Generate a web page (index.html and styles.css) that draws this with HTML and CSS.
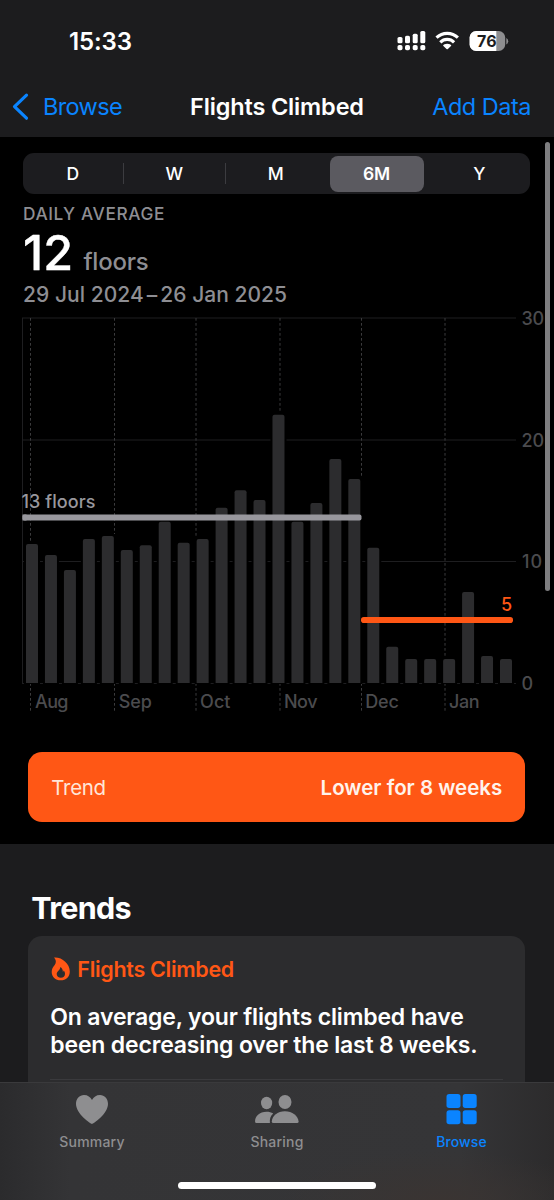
FILE: index.html
```html
<!DOCTYPE html>
<html lang="en">
<head>
<meta charset="utf-8">
<title>Flights Climbed</title>
<link rel="stylesheet" href="styles.css">
</head>
<body>
<div class="app">
  <header class="top">
    <div class="status">
      <span class="time">15:33</span>
      <svg class="status-icons" width="112" height="24" viewBox="0 0 112 24">
        <g fill="#fff">
          <rect x="0.5" y="8" width="5" height="6.3" rx="1.6"/><rect x="8" y="6.7" width="5" height="7.6" rx="1.6"/><rect x="15.7" y="4.7" width="5" height="9.6" rx="1.6"/><rect x="23.3" y="2" width="5" height="12.3" rx="1.6"/>
          <rect x="0.5" y="16" width="5" height="5.2" rx="1.8"/><rect x="8" y="16" width="5" height="5.2" rx="1.8"/><rect x="15.7" y="16" width="5" height="5.2" rx="1.8"/><rect x="23.3" y="16" width="5" height="5.2" rx="1.8"/>
        </g>
        <g transform="translate(3.700 0)">
          <path fill="#fff" d="M46.500 14.700C48.800 14.700 50 15.500 50.400 16Q50.800 16.500 50.300 16.900L47.200 20Q46.500 20.600 45.800 20L42.700 16.900Q42.200 16.500 42.600 16C43 15.500 44.200 14.700 46.500 14.700Z"/>
          <path d="M39.600 13.300A9.700 9.700 0 0 1 53.400 13.300M35.800 8.700A15.500 15.500 0 0 1 57.200 8.700" fill="none" stroke="#fff" stroke-width="3.100"/>
        </g>
        <defs><clipPath id="batt"><rect x="72.600" y="2" width="35.600" height="20" rx="6.500"/></clipPath></defs>
        <g clip-path="url(#batt)"><rect x="72" y="2" width="38" height="20" fill="#8e8e90"/><rect x="72" y="2" width="27.300" height="20" fill="#fff"/></g>
        <path d="M109.300 9v6.400q1.900-.8 1.900-3.200t-1.900-3.200z" fill="#8e8e90"/>
        <text class="battery" x="89.800" y="17.700" text-anchor="middle" textLength="19.500">76</text>
      </svg>
    </div>
    <nav class="nav">
      <a class="back"><svg width="18" height="30" viewBox="0 0 18 30"><path d="M14.500 3.200 2.500 14.700l12 11.500" fill="none" stroke="#0a84ff" stroke-width="3.200" stroke-linecap="round" stroke-linejoin="round"/></svg><span>Browse</span></a>
      <h1 class="title">Flights Climbed</h1>
      <a class="add">Add Data</a>
    </nav>
  </header>

  <main>
    <section class="panel">
      <div class="segments">
        <span class="seg">D</span><span class="seg line">W</span><span class="seg line">M</span><span class="seg on">6M</span><span class="seg">Y</span>
      </div>
      <div class="label">DAILY AVERAGE</div>
      <div class="value"><span class="num">12</span><span class="unit">floors</span></div>
      <div class="range">29 Jul 2024<span class="dash">–</span>26 Jan 2025</div>
      <svg class="chart" width="554" height="410" viewBox="0 310 554 410">
        <path d="M22.500 318V683.500M22 318H516M22 440H516M22 561.500H516M22 683.500H516" stroke="#1e1e20" fill="none"/>
        <path d="M30.500 318V713M114.500 318V713M196 318V713M280 318V713M361.500 318V713M445 318V713" stroke="#3b3b3d" stroke-dasharray="2.700 2.300" fill="none"/>
        <g class="bars" id="bars"></g>
        <rect x="22.500" y="514.500" width="339" height="6" rx="2" fill="#98979d"/>
        <rect x="22.500" y="514.500" width="4" height="6" fill="#98979d"/>
        <rect x="361" y="617" width="152" height="6" rx="2.800" fill="#ff5715"/>
        <g class="axis">
          <text x="521.500" y="324.500" textLength="22.500">30</text><text x="521.500" y="446.500" textLength="22.500">20</text><text x="522" y="568" textLength="20">10</text><text x="521.500" y="689.800">0</text>
          <text x="35" y="708.300" textLength="33.500">Aug</text><text x="118.800" y="708.300" textLength="33">Sep</text><text x="200" y="708.300" textLength="30.500">Oct</text><text x="284" y="708.300" textLength="33.500">Nov</text><text x="365.300" y="708.300" textLength="33.500">Dec</text><text x="449" y="708.300" textLength="30.500">Jan</text>
        </g>
        <text class="mark grey" x="21.500" y="507.500" textLength="74">13 floors</text>
        <text class="mark orange" x="501" y="610.500">5</text>
      </svg>
      <div class="trend"><span>Trend</span><strong>Lower for 8 weeks</strong></div>
    </section>
    <section class="trends">
      <h2>Trends</h2>
      <article class="card">
        <div class="card-head">
          <svg width="20" height="24" viewBox="0 0 20 24"><path fill="#ff5715" fill-rule="evenodd" d="M4 .6C11.500-.2 19.800 6.500 19.800 14.400 19.800 19.800 16 23.300 10.700 23.300 5.400 23.300 1.700 19.800 1.700 15 1.700 12.300 2.800 10.300 4.500 8.300 6.500 5.600 6.200 2.900 4 .6ZM10.200 10c.4 2.700-3.500 4-3.500 7.100 0 2.200 1.800 3.700 4.200 3.700s4.100-1.600 4.100-3.800c0-1.400-.5-2.500-1.300-3.500-.1.700-.4 1.100-.8 1.400 0-2.100-.9-4-2.700-4.900Z"/></svg>
          <span>Flights Climbed</span>
        </div>
        <p class="l1">On average, your flights climbed have</p>
        <p class="l2">been decreasing over the last 8 weeks.</p>
        <div class="rule"></div>
      </article>
    </section>
  </main>

  <footer class="tabs">
    <div class="tab-row">
      <div class="tab"><svg width="46" height="34" viewBox="0 0 46 34"><path fill="#8e8e90" d="M23 32C22 32 7 22 7 11.800 7 6.500 10.500 3 15 3c3.700 0 6.500 2 8 5 1.500-3 4.300-5 8-5 4.500 0 8 3.500 8 8.800C39 22 24 32 23 32Z"/></svg><span class="t1">Summary</span></div>
      <div class="tab"><svg width="46" height="34" viewBox="0 0 46 34"><g fill="#8e8e90"><ellipse cx="12.600" cy="11" rx="5.600" ry="6.200"/><ellipse cx="31" cy="10" rx="6.500" ry="7.100"/><path d="M1.100 30C.6 24.500 5.600 19.800 12.600 19.800c2.500 0 4.800.6 6.600 1.700-2.900 2.400-3.700 5.500-3.300 9.500H2.400Q1.200 31 1.100 30Z"/><path d="M17.800 29.500C18.100 24 23.600 19.300 30.900 19.300S44.100 24 44.600 29.500Q44.600 31 43.100 31H19.300Q17.800 31 17.800 29.500Z"/></g></svg><span class="t2">Sharing</span></div>
      <div class="tab active"><svg width="46" height="34" viewBox="0 0 46 34"><g fill="#0a84ff"><rect x="7.500" y="2" width="14" height="14" rx="2.700"/><rect x="23.700" y="2" width="14" height="14" rx="2.700"/><rect x="7.500" y="18.200" width="14" height="14" rx="2.700"/><rect x="23.700" y="18.200" width="14" height="14" rx="2.700"/></g></svg><span class="t3">Browse</span></div>
    </div>
    <div class="home"></div>
  </footer>
  <div class="scrollbar"></div>
</div>
<script src="chart.js"></script>
</body>
</html>
```

FILE: styles.css
```css
* { box-sizing: border-box; }
body, h1, h2, p { margin: 0; }
body { background: #1c1c1e; color: #fff; font-family: Inter, "Liberation Sans", sans-serif; overflow: hidden; }
.app { position: relative; display: flex; flex-direction: column; width: 554px; height: 1200px; overflow: hidden; }
.top { flex: none; height: 137px; background: #1c1c1e; }
.status { display: flex; justify-content: space-between; padding: 29px 45px 0 69px; height: 77px; }
.time { font-size: 24px; font-weight: 600; line-height: 26px; letter-spacing: -0.1px; }
.battery { font: 700 16px Inter, sans-serif; fill: #1c1c1e; }
.nav { display: flex; justify-content: space-between; align-items: center; height: 59px; padding: 0 23px 0 12px; font-size: 23.500px; color: #0a84ff; }
.back { display: flex; align-items: center; gap: 13px; width: 178px; letter-spacing: -0.65px; }
.title { flex: 1; color: #fff; font-size: 23.500px; font-weight: 600; letter-spacing: -0.15px; white-space: nowrap; }
.add { letter-spacing: -0.5px; }
main { flex: none; height: 945px; overflow: hidden; }
.panel { height: 707px; background: #000; padding-top: 16px; }
.segments { display: grid; grid-template-columns: repeat(5, 1fr); align-items: center; width: 507px; height: 41px; margin-left: 23px; border-radius: 11px; background: #1c1c1f; }
.seg { height: 21px; margin-left: -1px; line-height: 21px; text-align: center; font-size: 17.500px; font-weight: 500; border-left: 1px solid transparent; letter-spacing: -0.3px; padding-right: 2px; }
.seg:last-child { padding-right: 0; }
.seg.line { border-left-color: #3c3c40; }
.seg.on { height: 36px; line-height: 36px; margin: 0 5px 0 3px; padding-right: 1px; border: 0; border-radius: 8px; background: #5b5a60; font-weight: 600; }
.label { margin: 9px 0 0 23px; height: 20px; line-height: 21px; font-size: 17.300px; font-weight: 500; color: #8e8e93; letter-spacing: 0.6px; }
.value { display: flex; align-items: baseline; height: 58px; line-height: 60px; padding-left: 23px; }
.num { width: 60.500px; font-size: 48.500px; font-weight: 500; -webkit-text-stroke: 0.4px #fff; }
.unit { font-size: 24px; font-weight: 500; color: #8e8e93; letter-spacing: -0.25px; }
.range { height: 29px; padding-left: 23px; line-height: 28px; font-size: 21px; font-weight: 500; color: #8e8e93; white-space: nowrap; letter-spacing: 0.04px; }
.dash { padding: 0 3px; }
.chart { display: block; margin-bottom: 32px; overflow: visible; }
.axis { font: 500 18px Inter, sans-serif; fill: #4b4b4e; }
.mark { font: 500 18px Inter, sans-serif; }
.grey { fill: #98979d; }
.orange { fill: #ff5715; }
.halo { fill: #000; }
.bar { fill: #2c2c2e; }
.trend { display: flex; align-items: center; justify-content: space-between; width: 497px; height: 70px; margin-left: 28.300px; padding: 0 23px; border-radius: 14px; background: #ff5715; font-size: 20.500px; }
.trend span { color: #ffe6d8; letter-spacing: -0.3px; }
.trend strong { color: #fff3ec; font-weight: 600; letter-spacing: 0; }
.trends { padding: 44px 28.700px 0 28.300px; }
.trends h2 { padding-left: 3px; height: 48px; line-height: 40px; font-size: 30.500px; font-weight: 700; letter-spacing: -0.7px; }
.card { height: 180px; padding: 20px 22px 0; border-radius: 14px; background: #2c2c2e; }
.card-head { display: flex; align-items: center; gap: 7px; height: 25px; font-size: 21.500px; font-weight: 600; color: #ff5715; letter-spacing: -0.3px; }
.card p { font-size: 23px; font-weight: 600; line-height: 28px; white-space: nowrap; letter-spacing: -0.17px; }
.card .l1 { margin-top: 22px; }
.rule { margin-top: 20px; height: 1px; background: #3a3a3d; }
.tabs { flex: none; height: 118px; border-top: 1px solid #3a3a3c; background: radial-gradient(ellipse 160px 50px at 440px 118px, #3a3432, transparent), linear-gradient(90deg, #2b2b2d 0, #343436 70px, #353537 460px, #2c2b2c 100%); }
.tab-row { display: flex; justify-content: space-between; height: 99px; padding: 9px 0 0; }
.tab { display: flex; flex-direction: column; align-items: center; width: 184px; font-size: 14px; font-weight: 500; color: #8e8e90; line-height: 20px; gap: 6px; letter-spacing: 0.2px; }
.active { color: #0a84ff; }
.t3 { padding-right: 1px; letter-spacing: 0.1px; }
.home { width: 198px; height: 7px; margin: 0 auto; border-radius: 4px; background: #fff; }
.scrollbar { position: absolute; left: 545px; top: 142px; width: 5px; height: 449px; border-radius: 3px; background: #7e7e80; }
```

FILE: chart.js
```js
const tops = [544, 555, 570, 539, 536, 550, 545.3, 521.7, 542.7, 539, 507.7, 490.3, 500, 414.7, 521.7, 503, 459, 479, 547.7, 646.7, 659, 659, 659, 592, 656, 659];
const group = document.getElementById("bars");
const base = 683;
tops.forEach((top, i) => {
  const x = 26 + i * 18.96;
  group.insertAdjacentHTML("beforeend",
    `<rect class="halo" x="${x - 2}" y="${top - 2}" width="16" height="${base - top + 3}"/>` +
    `<path class="bar" d="M${x} ${base}V${top + 2}q0-2 2-2h8q2 0 2 2V${base}z"/>`);
});
```
